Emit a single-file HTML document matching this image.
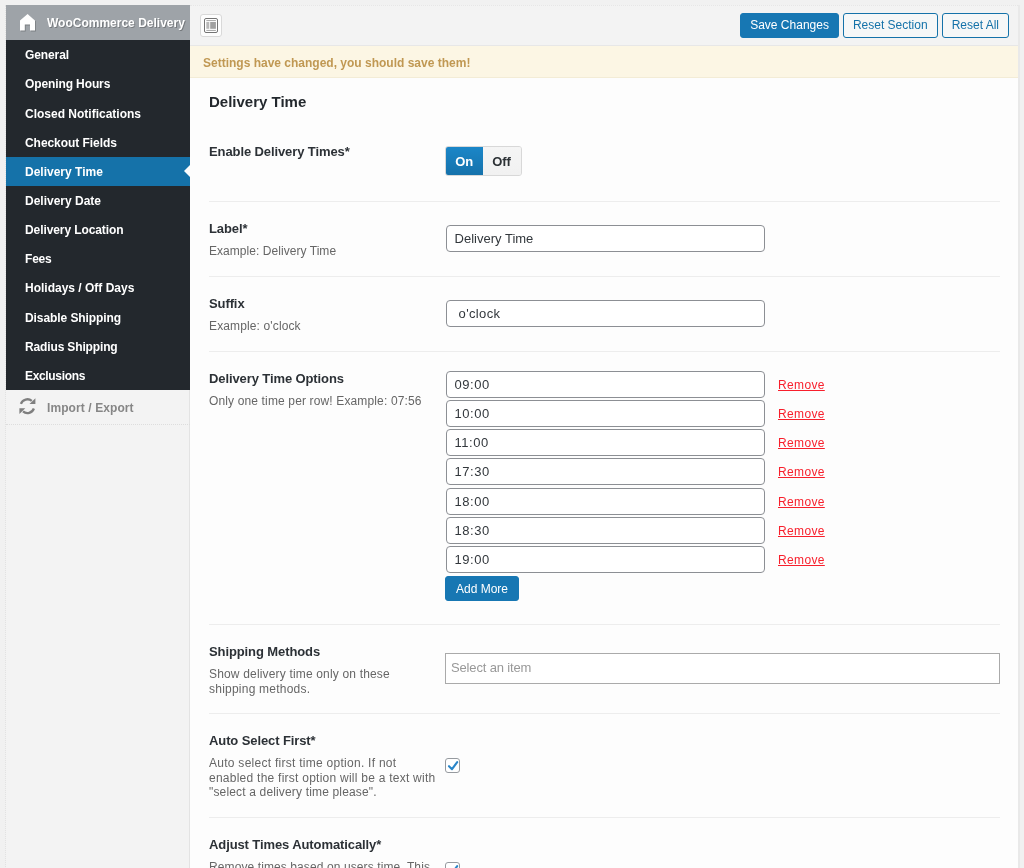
<!DOCTYPE html>
<html lang="en">
<head>
<meta charset="utf-8">
<title>WooCommerce Delivery – Delivery Time</title>
<style>
*{box-sizing:border-box;margin:0;padding:0}
html,body{width:1024px;height:868px;overflow:hidden}
body{background:#f1f1f1;font-family:"Liberation Sans",Arial,sans-serif;font-size:13px;color:#32373c;position:relative}
#wrap:before{content:"";position:absolute;left:-1px;top:0;height:900px;border-left:1px dotted #e2e2e2}
#wrap{position:absolute;left:6px;top:5px;width:1012px;height:900px;background:#fdfdfd;will-change:transform;box-shadow:2px 0 0 #e9e9e9}
/* sidebar */
#side{position:absolute;left:0;top:0;width:184px;height:900px;background:#f3f3f3;border-right:1px solid #e3e3e3}
#side .head{height:35px;background:#9ea3a8;color:#fff;font-weight:bold;font-size:12px;line-height:36px;padding-left:41px;position:relative;text-shadow:1px 1px 0 rgba(0,0,0,.25);white-space:nowrap;width:184px}
#side .head svg{position:absolute;left:13.7px;top:8.8px}
#side ul{list-style:none;background:#23282d;width:184px;height:349.8px}
#side li{height:29.15px;line-height:31px;padding-left:19px;color:#fff;font-weight:bold;font-size:12px;position:relative;white-space:nowrap}
#side li.active{background:#1572a9}
#side li.active:after{content:"";position:absolute;right:0;top:8px;border:6px solid transparent;border-right-color:#fdfdfd;border-left-width:0}
#side .imp{height:35px;line-height:37px;padding-left:41px;color:#868686;font-weight:bold;font-size:12px;border-bottom:1px dotted #ddd;position:relative;width:184px;letter-spacing:.09px}
#side .imp svg{position:absolute;left:12.7px;top:8px}
/* main */
#main{position:absolute;left:184px;top:0;width:828px}
#bar{height:41px;background:#f3f3f3;border-bottom:1px solid #e7e7e7;border-top:1px dotted #e6e6e6;position:relative}
#bar .exp{position:absolute;left:10px;top:8px;width:22px;height:23px;border:1px solid #d9d9d9;border-radius:3px;background:#fdfdfd}
#bar .btns{position:absolute;right:9px;top:7px;white-space:nowrap;font-size:0}
.btn{display:inline-block;height:25px;line-height:23px;padding:0 9px;border:1px solid #1572a9;border-radius:3px;font-size:12px;color:#1572a9;background:#f6f7f7;margin-left:4px;vertical-align:top}
.btn.pri{background:#1777b3;border-color:#1777b3;color:#fff}
#note{height:32px;line-height:34px;background:#fcf6e4;border-bottom:1px solid #f3ecd6;color:#c09853;font-weight:bold;font-size:12px;padding-left:13px}
#cont{padding:0 18px 0 19px}
h2{font-size:15px;font-weight:bold;color:#23282d;height:47px;line-height:47px}
.row{position:relative;border-bottom:1px solid #ededed}
.row .lab{position:absolute;left:0;font-weight:bold;font-size:13px;color:#2c3136;white-space:nowrap;letter-spacing:-.1px}
.row .desc{position:absolute;left:0;font-size:12px;color:#666;line-height:14.5px;white-space:nowrap;letter-spacing:.2px}
.row .fld{position:absolute;left:236px}
input.t{display:block;width:319px;margin-left:1px;height:27px;border:1px solid #8c8f94;border-radius:4px;background:#fff;font:13px "Liberation Sans",Arial,sans-serif;color:#32373c;padding:0 8px 0 7.6px}
.rm{position:absolute;left:333px;color:#f81f2c;text-decoration:underline;font-size:12px;white-space:nowrap;letter-spacing:.35px}
.mi{position:relative;height:29px}
.mi .rm{top:7px}
.add{margin-left:0;height:25px;line-height:25px;padding:0 10px;position:relative;top:1px}
.sw{display:inline-block;height:30px;border-radius:3px;font-size:0;white-space:nowrap;border:1px solid #d8d8d8;background:#f3f3f3;overflow:hidden}
.sw span{display:inline-block;height:28px;line-height:30px;font-size:13px;font-weight:bold;color:#2c3135;padding:0 9.8px 0 9.3px;vertical-align:top;background:linear-gradient(#f5f5f5,#f1f1f1)}
.sw .on{background:linear-gradient(#1b87c9,#1571aa);color:#fff;margin:-1px 0 -1px -1px;height:30px;line-height:32px;padding:0 9.6px 0 10.2px;border-radius:3px 0 0 3px}
.sel{width:555px;height:31px;border:1px solid #aaa;background:#fff;color:#999;font-size:13px;line-height:28px;padding-left:5px;letter-spacing:-.15px}
.cb{display:inline-block;width:15px;height:15px;border:1px solid #969a9f;border-radius:3px;background:#fff;position:relative}
.cb svg{position:absolute;left:0;top:0}
</style>
</head>
<body>
<div id="wrap">
  <div id="side">
    <div class="head"><svg width="18" height="19" viewBox="0 0 18 19"><path id="hm" d="M7.6 0 L15 6.4 L15 16.6 L10 16.6 L10 10.6 L4.8 10.6 L4.8 16.6 L0 16.6 L0 6.4 Z" fill="rgba(0,0,0,.22)" transform="translate(0.9,0.9)"/><path d="M7.6 0 L15 6.4 L15 16.6 L10 16.6 L10 10.6 L4.8 10.6 L4.8 16.6 L0 16.6 L0 6.4 Z" fill="#fff"/></svg>WooCommerce Delivery</div>
    <ul>
      <li style="letter-spacing:-.1px">General</li>
      <li style="letter-spacing:-.11px">Opening Hours</li>
      <li style="line-height:33px">Closed Notifications</li>
      <li style="letter-spacing:-.06px;line-height:33px">Checkout Fields</li>
      <li class="active">Delivery Time</li>
      <li>Delivery Date</li>
      <li style="letter-spacing:-.09px">Delivery Location</li>
      <li style="letter-spacing:-.2px">Fees</li>
      <li>Holidays / Off Days</li>
      <li style="letter-spacing:-.08px;line-height:33px">Disable Shipping</li>
      <li style="letter-spacing:-.14px;line-height:33px">Radius Shipping</li>
      <li style="letter-spacing:-.33px">Exclusions</li>
    </ul>
    <div class="imp"><svg width="17" height="17" viewBox="0 0 17 17"><g fill="none" stroke="#7f7f7f" stroke-width="2.3"><path d="M1.9 5.8 A6.9 6.9 0 0 1 12.8 2.9"/><path d="M14.9 10.5 A6.9 6.9 0 0 1 4 13.4"/></g><path d="M16.4 0.3 L16.4 6.1 L10.5 6.1 Z M0.4 16 L0.4 10.2 L6.3 10.2 Z" fill="#7f7f7f"/></svg>Import / Export</div>
  </div>
  <div id="main">
    <div id="bar">
      <span class="exp"><svg width="19" height="21" viewBox="0 0 19 21" style="display:block"><rect x="3.5" y="3.5" width="13" height="14" rx="1.5" fill="#fff" stroke="#747474" stroke-width="1"/><rect x="5.3" y="5.1" width="9.6" height="1" fill="#a5a5a5"/><rect x="5.3" y="14.9" width="9.6" height="1" fill="#a5a5a5"/><rect x="5.3" y="7" width="3" height="6.8" fill="#b8b8b8"/><rect x="9.2" y="7" width="5.7" height="6.8" fill="#a0a0a0"/></svg></span>
      <div class="btns"><span class="btn pri">Save Changes</span><span class="btn">Reset Section</span><span class="btn">Reset All</span></div>
    </div>
    <div id="note">Settings have changed, you should save them!</div>
    <div id="cont">
      <h2>Delivery Time</h2>
      <div class="row" style="height:77px">
        <div class="lab" style="top:19px">Enable Delivery Times*</div>
        <div class="fld" style="top:21px"><span class="sw"><span class="on">On</span><span class="off">Off</span></span></div>
      </div>
      <div class="row" style="height:75px">
        <div class="lab" style="top:19px">Label*</div>
        <div class="desc" style="top:42px;letter-spacing:.05px">Example: Delivery Time</div>
        <div class="fld" style="top:23px"><input class="t" type="text" value="Delivery Time"></div>
      </div>
      <div class="row" style="height:75px">
        <div class="lab" style="top:19px">Suffix</div>
        <div class="desc" style="top:42px;letter-spacing:.13px">Example: o'clock</div>
        <div class="fld" style="top:23px"><input class="t" type="text" value=" o'clock" style="letter-spacing:.35px"></div>
      </div>
      <div class="row" style="height:273px">
        <div class="lab" style="top:19px">Delivery Time Options</div>
        <div class="desc" style="top:42px;letter-spacing:.14px">Only one time per row! Example: 07:56</div>
        <div class="fld multi" style="top:19px">
          <div class="mi"><input class="t" type="text" value="09:00" style="letter-spacing:.5px"><a class="rm">Remove</a></div>
          <div class="mi"><input class="t" type="text" value="10:00" style="letter-spacing:.5px"><a class="rm">Remove</a></div>
          <div class="mi"><input class="t" type="text" value="11:00" style="letter-spacing:.5px"><a class="rm">Remove</a></div>
          <div class="mi" style="height:30px"><input class="t" type="text" value="17:30" style="letter-spacing:.5px"><a class="rm">Remove</a></div>
          <div class="mi"><input class="t" type="text" value="18:00" style="letter-spacing:.5px"><a class="rm">Remove</a></div>
          <div class="mi"><input class="t" type="text" value="18:30" style="letter-spacing:.5px"><a class="rm">Remove</a></div>
          <div class="mi"><input class="t" type="text" value="19:00" style="letter-spacing:.5px"><a class="rm">Remove</a></div>
          <span class="btn pri add">Add More</span>
        </div>
      </div>
      <div class="row" style="height:89px">
        <div class="lab" style="top:19px">Shipping Methods</div>
        <div class="desc" style="top:42px"><span style="letter-spacing:.17px">Show delivery time only on these</span><br><span style="letter-spacing:.23px">shipping methods.</span></div>
        <div class="fld" style="top:28px"><div class="sel">Select an item</div></div>
      </div>
      <div class="row" style="height:104px">
        <div class="lab" style="top:19px">Auto Select First*</div>
        <div class="desc" style="top:42px"><span style="letter-spacing:.27px">Auto select first time option. If not</span><br><span style="letter-spacing:.25px">enabled the first option will be a text with</span><br><span style="letter-spacing:.16px">"select a delivery time please".</span></div>
        <div class="fld" style="top:44px"><span class="cb"><svg width="14" height="14" viewBox="0 0 14 14"><path d="M3 7.2 L6 10.2 L11.2 3.2" fill="none" stroke="#2a86c9" stroke-width="2.1" stroke-linecap="round" stroke-linejoin="round"/></svg></span></div>
      </div>
      <div class="row" style="height:104px;border-bottom:0">
        <div class="lab" style="top:19px">Adjust Times Automatically*</div>
        <div class="desc" style="top:42px"><span style="letter-spacing:.1px">Remove times based on users time. This</span><br><span style="letter-spacing:.15px">will hide times that have already passed.</span></div>
        <div class="fld" style="top:44px"><span class="cb"><svg width="14" height="14" viewBox="0 0 14 14"><path d="M3 7.2 L6 10.2 L11.2 3.2" fill="none" stroke="#2a86c9" stroke-width="2.1" stroke-linecap="round" stroke-linejoin="round"/></svg></span></div>
      </div>
    </div>
  </div>
</div>
</body>
</html>
